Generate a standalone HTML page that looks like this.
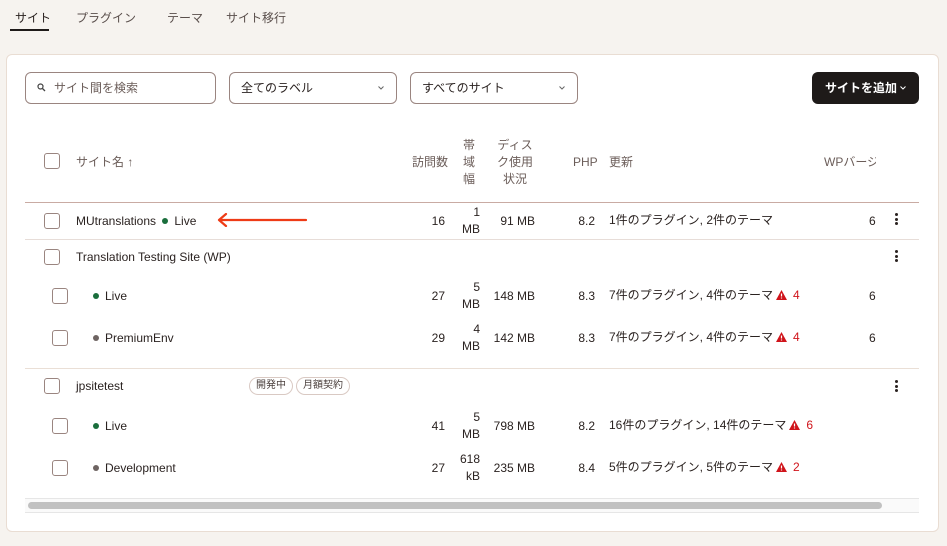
<!DOCTYPE html>
<html><head><meta charset="utf-8"><style>
*{box-sizing:border-box;margin:0;padding:0}
body{width:947px;height:546px;background:#f6f3ef;font-family:"Liberation Sans","Noto Sans CJK JP",sans-serif;font-size:12px;color:#2a2220;position:relative;overflow:hidden}
.a{position:absolute;white-space:nowrap;line-height:14px}
.card{position:absolute;left:6px;top:54px;width:933px;height:478px;background:#fff;border:1px solid #e9ddd3;border-radius:6px}
.box{position:absolute;border:1px solid #9a8580;border-radius:6px;height:32px}
.cb{position:absolute;width:16px;height:16px;border:1px solid #9a8580;border-radius:3px;background:#fff}
.hd{color:#6b5d59}
.r{text-align:right}
.dot{display:inline-block;width:6px;height:6px;border-radius:50%;margin-right:6px;vertical-align:1px}
.g{background:#1a6e3c}.gr{background:#6e6462}
.red{color:#d0141b}
.tag{position:absolute;height:18px;border:1px solid #d9c9c3;border-radius:9px;font-size:10px;line-height:16px;padding:0 6px;color:#4a3f3c}
.kb{position:absolute;width:3px}
.kb i{display:block;width:3px;height:3px;background:#2a2220;border-radius:50%;margin-bottom:1.5px}
.w{display:inline-block;vertical-align:-1px;margin:0 6px 0 3px}
</style></head><body>
<div class="a" style="left:15px;top:11px">サイト</div>
<div class="a" style="left:10px;top:29px;width:39px;height:2px;background:#1e1a19"></div>
<div class="a" style="left:76px;top:11px;color:#5a4f4c">プラグイン</div>
<div class="a" style="left:167px;top:11px;color:#5a4f4c">テーマ</div>
<div class="a" style="left:226px;top:11px;color:#5a4f4c">サイト移行</div>
<div class="card"></div>
<div class="box" style="left:25px;top:72px;width:191px"></div>
<svg class="a" style="left:37px;top:83px" width="9" height="9" viewBox="0 0 9 9"><circle cx="3.5" cy="3.5" r="2.5" fill="none" stroke="#444" stroke-width="1.2"/><path d="M5.5 5.5L8 8" stroke="#444" stroke-width="1.3"/></svg>
<div class="a" style="left:54px;top:81px;color:#6b5d59">サイト間を検索</div>
<div class="box" style="left:229px;top:72px;width:168px"></div>
<div class="a" style="left:241px;top:81px">全てのラベル</div>
<svg class="a" style="left:378px;top:86px" width="6" height="4"><path d="M.5.5L3 3 5.5.5" fill="none" stroke="#666"/></svg>
<div class="box" style="left:410px;top:72px;width:168px"></div>
<div class="a" style="left:422px;top:81px">すべてのサイト</div>
<svg class="a" style="left:559px;top:86px" width="6" height="4"><path d="M.5.5L3 3 5.5.5" fill="none" stroke="#666"/></svg>
<div class="a" style="left:812px;top:72px;width:107px;height:32px;background:#1e1a19;border-radius:6px"></div>
<div class="a" style="left:825px;top:81px;color:#fff;font-weight:bold">サイトを追加</div>
<svg class="a" style="left:900px;top:86px" width="6" height="4"><path d="M.5.5L3 3 5.5.5" fill="none" stroke="#fff"/></svg>

<div class="cb" style="left:44px;top:153px"></div>
<div class="a hd" style="left:76px;top:155px">サイト名 ↑</div>
<div class="a hd" style="left:412px;top:155px">訪問数</div>
<div class="a hd" style="left:463px;top:137px;line-height:17px;white-space:normal;width:12px">帯域幅</div>
<div class="a hd" style="left:497px;top:137px;line-height:17px;text-align:center;width:36px;white-space:normal">ディスク使用状況</div>
<div class="a hd" style="left:573px;top:155px">PHP</div>
<div class="a hd" style="left:609px;top:155px">更新</div>
<div class="a hd" style="left:824px;top:155px;width:52px;overflow:hidden">WPバージョン</div>
<div class="a" style="left:25px;top:202px;width:894px;height:1px;background:#c9aba3"></div>

<div class="cb" style="left:44px;top:213px"></div>
<div class="a" style="left:76px;top:214px">MUtranslations <span class="dot g" style="margin-left:3px"></span>Live</div>
<svg class="a" style="left:216px;top:213px" width="92" height="14"><path d="M90 7H4M10 1L3 7l7 6" fill="none" stroke="#ee3b16" stroke-width="2.2" stroke-linecap="round" stroke-linejoin="round"/></svg>
<div class="a r" style="left:420px;top:214px;width:25px">16</div>
<div class="a r" style="left:455px;top:204px;width:25px;line-height:17px">1<br>MB</div>
<div class="a r" style="left:490px;top:214px;width:45px">91 MB</div>
<div class="a r" style="left:565px;top:214px;width:30px">8.2</div>
<div class="a" style="left:609px;top:213px">1件のプラグイン, 2件のテーマ</div>
<div class="a" style="left:869px;top:214px;width:7px;overflow:hidden">6</div>
<div class="kb" style="left:895px;top:213px"><i></i><i></i><i></i></div>
<div class="a" style="left:25px;top:239px;width:894px;height:1px;background:#e7ddd8"></div>

<div class="cb" style="left:44px;top:249px"></div>
<div class="a" style="left:76px;top:250px">Translation Testing Site (WP)</div>
<div class="kb" style="left:895px;top:250px"><i></i><i></i><i></i></div>

<div class="cb" style="left:52px;top:288px"></div>
<div class="a" style="left:93px;top:289px"><span class="dot g"></span>Live</div>
<div class="a r" style="left:420px;top:289px;width:25px">27</div>
<div class="a r" style="left:455px;top:279px;width:25px;line-height:17px">5<br>MB</div>
<div class="a r" style="left:490px;top:289px;width:45px">148 MB</div>
<div class="a r" style="left:565px;top:289px;width:30px">8.3</div>
<div class="a" style="left:609px;top:288px">7件のプラグイン, 4件のテーマ<svg class="w" width="11" height="10"><path d="M5.5 0L11 10H0z" fill="#d0141b"/><path d="M5.5 3.5v3M5.5 7.5v1" stroke="#fff" stroke-width="1.2"/></svg><span class="red">4</span></div>
<div class="a" style="left:869px;top:289px;width:7px;overflow:hidden">6</div>

<div class="cb" style="left:52px;top:330px"></div>
<div class="a" style="left:93px;top:331px"><span class="dot gr"></span>PremiumEnv</div>
<div class="a r" style="left:420px;top:331px;width:25px">29</div>
<div class="a r" style="left:455px;top:321px;width:25px;line-height:17px">4<br>MB</div>
<div class="a r" style="left:490px;top:331px;width:45px">142 MB</div>
<div class="a r" style="left:565px;top:331px;width:30px">8.3</div>
<div class="a" style="left:609px;top:330px">7件のプラグイン, 4件のテーマ<svg class="w" width="11" height="10"><path d="M5.5 0L11 10H0z" fill="#d0141b"/><path d="M5.5 3.5v3M5.5 7.5v1" stroke="#fff" stroke-width="1.2"/></svg><span class="red">4</span></div>
<div class="a" style="left:869px;top:331px;width:7px;overflow:hidden">6</div>
<div class="a" style="left:25px;top:368px;width:894px;height:1px;background:#eadfd6"></div>

<div class="cb" style="left:44px;top:378px"></div>
<div class="a" style="left:76px;top:379px">jpsitetest</div>
<div class="tag" style="left:249px;top:377px">開発中</div>
<div class="tag" style="left:296px;top:377px">月額契約</div>
<div class="kb" style="left:895px;top:380px"><i></i><i></i><i></i></div>

<div class="cb" style="left:52px;top:418px"></div>
<div class="a" style="left:93px;top:419px"><span class="dot g"></span>Live</div>
<div class="a r" style="left:420px;top:419px;width:25px">41</div>
<div class="a r" style="left:455px;top:409px;width:25px;line-height:17px">5<br>MB</div>
<div class="a r" style="left:490px;top:419px;width:45px">798 MB</div>
<div class="a r" style="left:565px;top:419px;width:30px">8.2</div>
<div class="a" style="left:609px;top:418px">16件のプラグイン, 14件のテーマ<svg class="w" width="11" height="10"><path d="M5.5 0L11 10H0z" fill="#d0141b"/><path d="M5.5 3.5v3M5.5 7.5v1" stroke="#fff" stroke-width="1.2"/></svg><span class="red">6</span></div>

<div class="cb" style="left:52px;top:460px"></div>
<div class="a" style="left:93px;top:461px"><span class="dot gr"></span>Development</div>
<div class="a r" style="left:420px;top:461px;width:25px">27</div>
<div class="a r" style="left:455px;top:451px;width:25px;line-height:17px">618<br>kB</div>
<div class="a r" style="left:490px;top:461px;width:45px">235 MB</div>
<div class="a r" style="left:565px;top:461px;width:30px">8.4</div>
<div class="a" style="left:609px;top:460px">5件のプラグイン, 5件のテーマ<svg class="w" width="11" height="10"><path d="M5.5 0L11 10H0z" fill="#d0141b"/><path d="M5.5 3.5v3M5.5 7.5v1" stroke="#fff" stroke-width="1.2"/></svg><span class="red">2</span></div>

<div class="a" style="left:25px;top:498px;width:894px;height:15px;background:#fafafa;border-top:1px solid #e6e6e6;border-bottom:1px solid #e6e6e6"></div>
<div class="a" style="left:28px;top:502px;width:854px;height:7px;background:#c1c1c1;border-radius:4px"></div>
</body></html>
